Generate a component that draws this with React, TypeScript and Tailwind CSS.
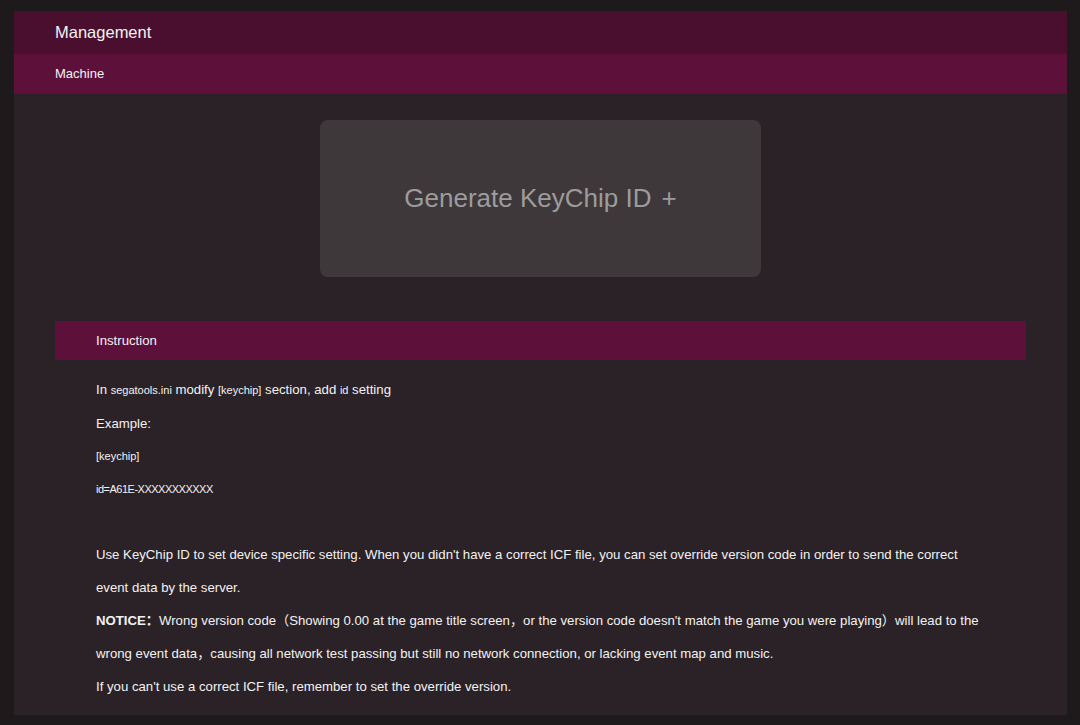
import React from "react";

const App: React.FC = () => {
  const font = { fontFamily: '"Liberation Sans", Arial, "Noto Sans CJK SC", sans-serif' };

  return (
    <div className="w-[1080px] h-[725px] bg-[#1e1a1c] pt-[11px] pl-[14px] pr-[13px] pb-[10px]" style={font}>
      <div className="h-full bg-[#2b2227] flex flex-col">
        {/* Header */}
        <div className="h-[43px] bg-[#4a0f2e] flex items-center px-[41px]">
          <span className="text-[16.5px] text-[#f2f2f2]">Management</span>
        </div>
        <div className="h-[40px] bg-[#5d103a] flex items-center px-[41px]">
          <span className="text-[13px] text-[#f2f2f2]">Machine</span>
        </div>

        {/* Content */}
        <div className="px-[41px]">
          <div className="flex justify-center mt-[26px]">
            <button className="w-[441px] h-[157px] rounded-lg bg-[#3e383b] flex items-center justify-center text-[26px] text-[#9c9c9c]">
              Generate KeyChip ID<span className="ml-[10px] font-light">+</span>
            </button>
          </div>

          <div className="mt-[44px] h-[39px] bg-[#5d103a] flex items-center pl-[41px]">
            <span className="text-[13.2px] text-[#f2f2f2]">Instruction</span>
          </div>

          <div className="pl-[41px] pr-[41px] mt-[13px] text-[13.2px] leading-[33px] text-[#f2f2f2]">
            <p>
              In <span className="text-[11px]">segatools.ini</span> modify{" "}
              <span className="text-[11px]">[keychip]</span> section, add{" "}
              <span className="text-[11px]">id</span> setting
            </p>
            <p>Example:</p>
            <p className="text-[11px]">[keychip]</p>
            <p className="text-[11px] tracking-[-0.5px]">id=A61E-XXXXXXXXXXX</p>
            <p className="mt-[32px]">
              Use KeyChip ID to set device specific setting. When you didn't have a correct ICF file, you can set override
              version code in order to send the correct event data by the server.
            </p>
            <p>
              <b>NOTICE：</b>Wrong version code（Showing 0.00 at the game title screen，or the version code doesn't
              match the game you were playing）will lead to the wrong event data，causing all network test passing but
              still no network connection, or lacking event map and music.
            </p>
            <p>If you can't use a correct ICF file, remember to set the override version.</p>
          </div>
        </div>
      </div>
    </div>
  );
};

export default App;
